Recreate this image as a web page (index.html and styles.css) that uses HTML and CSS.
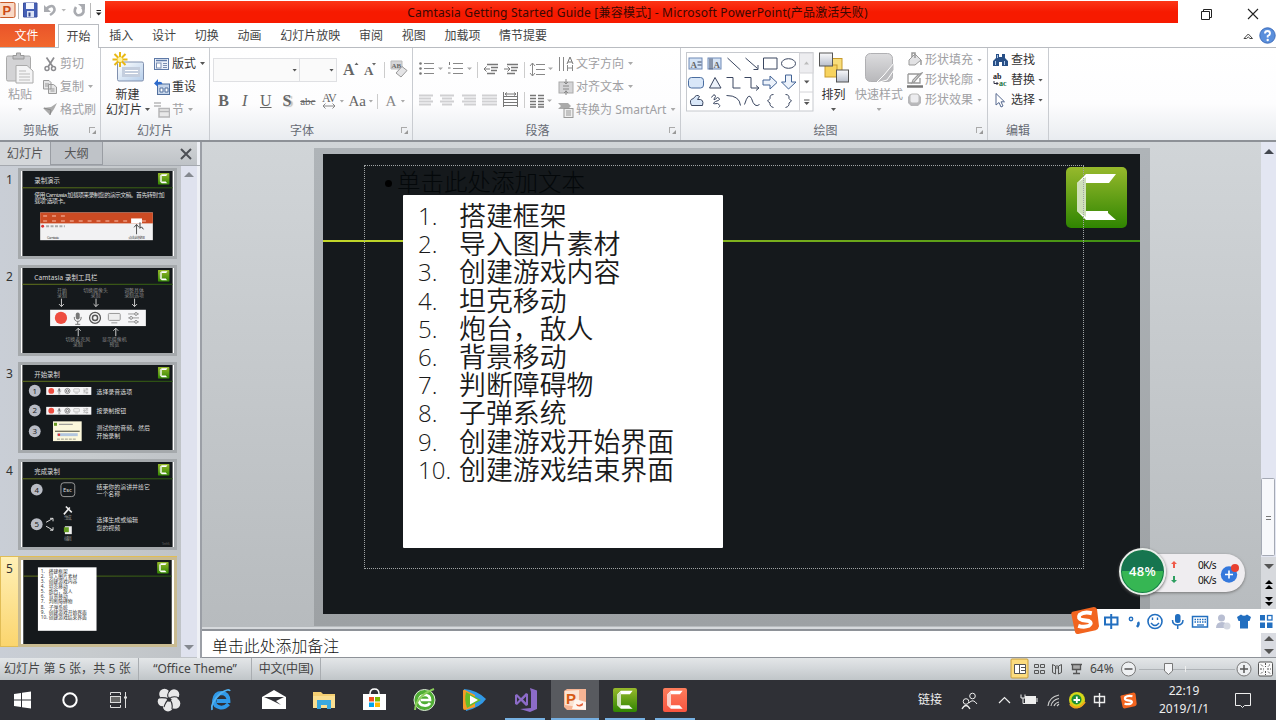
FILE: index.html
```
<!DOCTYPE html>
<html lang="zh-CN">
<head>
<meta charset="utf-8">
<title>Camtasia Getting Started Guide - Microsoft PowerPoint</title>
<link rel="stylesheet" href="styles.css">
</head>
<body>
<svg class="defs" width="0" height="0">
  <defs>
    <linearGradient id="gGreen" x1="0" y1="0" x2="0" y2="1"><stop offset="0" stop-color="#97b92c"/><stop offset="1" stop-color="#2f8501"/></linearGradient>
    <linearGradient id="gRed" x1="0" y1="0" x2="0" y2="1"><stop offset="0" stop-color="#fd7d5c"/><stop offset="1" stop-color="#f95540"/></linearGradient>
    <linearGradient id="gLine" gradientUnits="userSpaceOnUse" x1="0" y1="0" x2="152" y2="0"><stop offset="0" stop-color="#66751c"/><stop offset="1" stop-color="#2c5c10"/></linearGradient>
    <linearGradient id="gBlue" x1="0" y1="0" x2="1" y2="1"><stop offset="0" stop-color="#fff"/><stop offset="1" stop-color="#b4cdea"/></linearGradient>
    <linearGradient id="gGray" x1="0" y1="0" x2="0" y2="1"><stop offset="0" stop-color="#dcdcde"/><stop offset="1" stop-color="#b8b8bb"/></linearGradient>
    <linearGradient id="gSilver" x1="0" y1="0" x2="0" y2="1"><stop offset="0" stop-color="#fafafc"/><stop offset="1" stop-color="#b9bfcb"/></linearGradient>
    <symbol id="cam" viewBox="0 0 61 61"><rect width="61" height="61" rx="5" fill="url(#gGreen)"/><path d="M50 7H20L11 16V44L20 53H50L42 46V44H20V16H43Z" fill="#fff"/><path d="M11 16L20 10V50L11 44Z" fill="#cfe0ba"/></symbol>
    <symbol id="camred" viewBox="0 0 61 61"><rect width="61" height="61" rx="5" fill="url(#gRed)"/><path d="M50 7H20L11 16V44L20 53H50L42 44H20V16H43Z" fill="#fff"/><path d="M11 16L20 10V50L11 44Z" fill="#fcd0c8"/></symbol>
    <symbol id="sogou" viewBox="0 0 30 30"><path d="M2 6L24 1Q27 1 27.500 4L29.500 21Q29 24 26 25L8 29Q5 29 4.500 26L1 9Q0 7 2 6Z" fill="#f2641f"/><path d="M22 7.500Q14 5.500 9.500 9Q7 13 12 14.500L19 15.500Q23 17.500 19 20.500Q14 22.500 8 20.500" fill="none" stroke="#fff" stroke-width="4"/></symbol>
    <symbol id="recbar" viewBox="0 0 97 17"><rect width="97" height="17" fill="#f6f6f7"/><circle cx="11" cy="8.500" r="6.200" fill="#ee4d40"/><rect x="26" y="3" width="4" height="7" rx="2" fill="#777"/><path d="M24.500 7.500Q24.500 12 28 12T31.500 7.500M28 12V15M25.500 15H30.500" fill="none" stroke="#777"/><circle cx="45.500" cy="8.500" r="5.500" fill="none" stroke="#555" stroke-width="1.300"/><circle cx="45.500" cy="8.500" r="2.600" fill="none" stroke="#555" stroke-width="1.500"/><rect x="59" y="4" width="12" height="7" rx="1" fill="#eee" stroke="#999"/><path d="M62 13.500H68" stroke="#999"/><path d="M79 4.500H90M79 8.500H90M79 12.500H90" stroke="#999" fill="none"/><g fill="#f6f6f7" stroke="#888"><circle cx="87" cy="4.500" r="1.400"/><circle cx="82" cy="8.500" r="1.400"/><circle cx="87" cy="12.500" r="1.400"/></g></symbol>
  </defs>
</svg>

<div class="window">
  <header class="titlebar">
    <svg class="quick" width="105" height="24" viewBox="0 0 105 24">
      <rect x="-1" y="2.500" width="16" height="15" rx="1.500" fill="#f9d9c6" stroke="#c85a28"/><text x="2.500" y="15" class="pp">P</text>
      <path d="M18.500 3V19M90.500 3V18" stroke="#b8b8b8"/>
      <path d="M23.500 3H37V17H23.500Z" fill="#4560b5" stroke="#3a4ea0"/><rect x="26" y="3" width="8" height="6" fill="#f4f7ff"/><rect x="27" y="11" width="7" height="6" fill="#dce4f6"/><rect x="28.500" y="12.500" width="2" height="4" fill="#36468a"/>
      <path d="M46 9Q53 3 54.500 9Q55 12 50 15" fill="none" stroke="#a9abb0" stroke-width="2.600"/><path d="M44 5V12H51Z" fill="#a9abb0"/>
      <path d="M61.500 9H66L63.700 11.500Z" fill="#b8b8b8"/>
      <path d="M76 7Q73 12 77 15Q82 16 83.500 12Q84 9 82 7" fill="none" stroke="#a9abb0" stroke-width="2.600"/><path d="M78 4H85V10Z" fill="#a9abb0"/>
      <path d="M96.500 10.500H101" stroke="#222"/><path d="M96 12.500H101.500L98.700 15.500Z" fill="#222"/>
    </svg>
    <h1 class="caption">Camtasia Getting Started Guide [兼容模式] - Microsoft PowerPoint(产品激活失败)</h1>
    <svg class="winbtns" width="98" height="24" viewBox="0 0 98 24"><path d="M23.500 11.500H31.500V19.500H23.500ZM25.500 11.500V9.500H33.500V17.500H31.500" fill="none" stroke="#222"/><path d="M70 9L80 19M80 9L70 19" stroke="#222" stroke-width="1.100"/></svg>
  </header>

  <nav class="tabs">
    <span class="tab file">文件</span><span class="tab active">开始</span><span class="tab">插入</span><span class="tab">设计</span><span class="tab">切换</span><span class="tab">动画</span><span class="tab wide">幻灯片放映</span><span class="tab">审阅</span><span class="tab">视图</span><span class="tab mid">加载项</span><span class="tab wide2">情节提要</span>
    <svg class="help" width="36" height="24" viewBox="0 0 36 24"><path d="M4 14.500L8.300 10L12.500 14.500H10L8.300 13L6.500 14.500Z" fill="none" stroke="#444"/><circle cx="27.500" cy="11.500" r="7.700" fill="#5a8fdc" stroke="#3d6cba"/><path d="M25 9.500Q25 7 27.500 7T30 9.500Q30 11 27.700 12V13.500" fill="none" stroke="#fff" stroke-width="1.900"/><circle cx="27.700" cy="16" r="1.200" fill="#fff"/></svg>
  </nav>

  <section class="ribbon">
    <div class="group clipboard">
      <div class="body">
        <div class="big off"><svg width="30" height="32" viewBox="0 0 30 32"><rect x="1.500" y="4" width="24" height="25" rx="1.500" fill="#d3d3d5" stroke="#aaa"/><path d="M8 7V3.500H11.500V1H15.500V3.500H19V7Z" fill="#c2c2c4" stroke="#999"/><path d="M11 13.500H22L28 19V31H11Z" fill="#f4f4f5" stroke="#aaa"/><path d="M14 19H21M14 22H25M14 25H25M14 28H25" stroke="#bbb"/></svg><span>粘贴</span><i class="arr"></i></div>
        <div class="col r23">
          <div class="cmd off"><svg width="15" height="16" viewBox="0 0 15 16"><path d="M3.500 1.500L10 11M11 1.500L5 11" stroke="#8c8c90" stroke-width="1.700"/><circle cx="4" cy="12.500" r="2" fill="none" stroke="#8c8c90" stroke-width="1.500"/><circle cx="10.500" cy="12.500" r="2" fill="none" stroke="#8c8c90" stroke-width="1.500"/></svg><span>剪切</span></div>
          <div class="cmd off"><svg width="15" height="16" viewBox="0 0 15 16"><path d="M.5 1.500H6L8 3.500V10H.5ZM5.500 5.500H10.500L13.500 8V14.500H5.500Z" fill="#e6e6e7" stroke="#999"/><path d="M2 5H6M2 7H5M7.500 10H11.500M7.500 12H11.500" stroke="#999"/></svg><span>复制</span><i class="arr"></i></div>
          <div class="cmd off"><svg width="15" height="16" viewBox="0 0 15 16"><path d="M0 6L8 5L14 1L11 7L7 13Z" fill="#aaa"/><path d="M1 6L8 8L7 13" fill="none" stroke="#888"/></svg><span>格式刷</span></div>
        </div>
      </div>
      <div class="label"><span>剪贴板</span></div><i class="launch"></i>
    </div>
    <div class="group slides">
      <div class="body">
        <div class="big"><svg width="34" height="32" viewBox="0 0 34 32"><rect x="6.500" y="10" width="26" height="19" rx="1.500" fill="url(#gBlue)" stroke="#8090ae"/><path d="M11 15H29V25H11Z" fill="#c4cede"/><path d="M14 18.500H27M14 21.500H27" stroke="#fff"/><path d="M9 0V15M1.500 7.500H16.500M3.500 2L14.500 13M14.500 2L3.500 13" stroke="#e9b814" stroke-width="2"/><circle cx="9" cy="7.500" r="2.500" fill="#fff5a0"/></svg><span>新建</span><span class="inline">幻灯片<i class="arr"></i></span></div>
        <div class="col r23">
          <div class="cmd"><svg width="16" height="16" viewBox="0 0 16 16"><rect x=".5" y="2.500" width="14" height="11" fill="#edf2fa" stroke="#5f7aa8"/><path d="M2 4.500H13" stroke="#5f7aa8" stroke-width="1.500"/><rect x="2.500" y="7" width="4.500" height="5" fill="#fff" stroke="#7c90b4"/><path d="M9 7.500H13M9 9.500H13M9 11.500H13" stroke="#7c90b4"/></svg><span>版式</span><i class="arr"></i></div>
          <div class="cmd"><svg width="16" height="16" viewBox="0 0 16 16"><rect x="3.500" y="5" width="12" height="10.500" fill="#c5d4e9" stroke="#52709e"/><path d="M6 9H9V13H6ZM11 9H14V13H11Z" fill="#fff" stroke="#52709e"/><path d="M8.500 5Q8 2 4 3V0L0 4.500L4 8V5.500" fill="#2d6acb"/></svg><span>重设</span></div>
          <div class="cmd off"><svg width="16" height="16" viewBox="0 0 16 16"><path d="M0 1H7M0 4H7M5 6.500H15.500V15H5ZM5 9.500H15.500" fill="#e8e8e9" stroke="#b6b6b8" stroke-width="1.500"/></svg><span>节</span><i class="arr"></i></div>
        </div>
      </div>
      <div class="label"><span>幻灯片</span></div>
    </div>
    <div class="group font">
      <div class="fontbody">
        <div class="frow"><div class="combo name"><i class="arr"></i></div><div class="combo size"><i class="arr"></i></div>
          <svg class="fsz" width="72" height="24" viewBox="0 0 72 24"><text x="3" y="17" class="ser" font-size="16" font-weight="bold">A</text><path d="M14.500 7L16.500 4.500L18.500 7Z" fill="#666"/><text x="24" y="17" class="ser" font-size="13" font-weight="bold">A</text><path d="M32 5H36L34 7.500Z" fill="#666"/><path d="M44.500 4V20" stroke="#ccc"/><path d="M51 3H62V11H51Z" fill="#d6d6d8" stroke="#bbb"/><text x="51.500" y="10" class="ser" font-size="7" font-weight="bold">AB</text><path d="M56 15L62 8.500L67 12.500L61 19Z" fill="#e4e4e6" stroke="#999"/></svg></div>
        <div class="frow chars"><b>B</b><em>I</em><u>U</u><b class="sh">S</b><s>abc</s><span class="av">AV<svg width="14" height="6" viewBox="0 0 14 6"><path d="M1 3H13M3.500 .5L1 3L3.500 5.500M10.500 .5L13 3L10.500 5.500" fill="none" stroke="#888"/></svg></span><i class="arr"></i><span class="aa">Aa</span><i class="arr"></i><i class="vsep"></i><span class="fa">A</span><i class="arr"></i></div>
      </div>
      <div class="label"><span>字体</span></div><i class="launch"></i>
    </div>
    <div class="group para">
      <div class="body">
        <svg class="paraicons" width="140" height="74" viewBox="413 48 140 74" fill="none" stroke="#777">
          <g stroke="#888"><path d="M424 63.500H434M424 68.500H434M424 73.500H434M453 63.500H463M453 68.500H463M453 73.500H463"/></g>
          <g fill="#777" stroke="none"><circle cx="420.500" cy="63.500" r="1.300"/><circle cx="420.500" cy="68.500" r="1.300"/><circle cx="420.500" cy="73.500" r="1.300"/><path d="M438 67.500H443L440.500 70ZM467 67.500H472L469.500 70ZM548 67.500H553L550.500 70ZM547 99.500H552L549.500 102Z" fill="#aaa"/></g>
          <path d="M449.500 62V65M448 68H450.500M448 73H450.500"/>
          <path d="M477.500 62V78M524.500 62V78M524.500 92V108" stroke="#ccc"/>
          <path d="M487 64.500H498M491 67.500H498M491 70.500H497M487 73.500H495M507 64.500H518M511 67.500H518M511 70.500H517M507 73.500H515" stroke-width="1.500"/><path d="M484 69H490M486.500 66.500L484 69L486.500 71.500M504 69H510M507.500 66.500L510 69L507.500 71.500"/>
          <path d="M536 64.500H545M536 69.500H545M536 74.500H545M532.500 63V76M530 66L532.500 63L535 66M530 73L532.500 76L535 73" stroke="#888"/>
          <g stroke="#d0d0d2" stroke-width="2.200"><path d="M419 95.500H433M419 98.500H431M419 101.500H433M419 104.500H431M440 95.500H454M442 98.500H452M440 101.500H454M442 104.500H452M462 95.500H476M464 98.500H476M462 101.500H476M464 104.500H476M482 95.500H497M482 98.500H497M482 101.500H497M482 104.500H497"/></g>
          <path d="M504 96.500H517M504 99.500H517M504 102.500H517M504 105.500H517M503.500 92V107M517.500 92V107M505 94H516M507 92.500L505 94L507 95.500M514 92.500L516 94L514 95.500"/>
          <path d="M530 95.500H536M538 95.500H544M530 98.500H536M538 98.500H544M530 101.500H536M538 101.500H544M530 104.500H536M538 104.500H544M530 107H536M538 107H544" stroke-width="1.300"/>
        </svg>
        <div class="col r23">
          <div class="cmd off"><svg width="16" height="16" viewBox="0 0 16 16"><path d="M1.500 1V15M5.500 1V15M9.500 9V15M14.500 9V15M9.500 12H14.500" stroke="#888"/><path d="M9 8L12 1L15 8M10 6H14" fill="none" stroke="#777"/></svg><span>文字方向</span><i class="arr"></i></div>
          <div class="cmd off"><svg width="16" height="16" viewBox="0 0 16 16"><rect x="1" y="3" width="14" height="11" fill="#d5d5d7" stroke="#aaa"/><path d="M5 7H11M5 10H11" stroke="#888"/><path d="M8 0V5M6 3L8 5L10 3M8 16V11.500M6 14L8 12L10 14" fill="none" stroke="#888"/></svg><span>对齐文本</span><i class="arr"></i></div>
          <div class="cmd off"><svg width="16" height="16" viewBox="0 0 16 16"><path d="M0 1H10L13 4L10 7H0L3 4Z" fill="#aaa"/><rect x="6" y="6.500" width="9" height="9" fill="#eee" stroke="#999"/><path d="M8 9H13M8 11H13M8 13H13" stroke="#999"/></svg><span class="smart">转换为 SmartArt</span><i class="arr"></i></div>
        </div>
      </div>
      <div class="label"><span>段落</span></div><i class="launch"></i>
    </div>
    <div class="group draw">
      <div class="body">
        <svg class="gallery" width="128" height="60" viewBox="685.500 51.500 128 60" fill="none" stroke="#3a4660">
          <rect x="686" y="52" width="126.500" height="58.500" fill="#fff" stroke="#c6c9ce"/><rect x="799" y="52.500" width="13.500" height="20" fill="#ededf0" stroke="#d4d4d8"/><path d="M799 91.500H812.500" stroke="#d4d4d8"/><path d="M799 73V110" stroke="#d4d4d8"/>
          <path d="M803.500 64L806 61L808.500 64Z" fill="#bbb" stroke="none"/><path d="M803.500 80H809L806.200 83ZM803.500 101.500H809L806.200 104.500Z" fill="#555" stroke="none"/><path d="M803.500 99.500H809" stroke="#555"/>
          <rect x="688.500" y="57.500" width="13" height="11" fill="#d6e4f6" stroke="#6f89b6"/><text x="690" y="67" class="ser" font-size="9" font-weight="bold" fill="#223">A</text><path d="M697 61.500H701M697 64.500H701"/>
          <rect x="707.500" y="57.500" width="13" height="11" fill="#d6e4f6" stroke="#6f89b6"/><text x="713" y="67" class="ser" font-size="9" font-weight="bold" fill="#223">A</text><path d="M709.500 58V69M711.500 58V69"/>
          <path d="M727 57.500L740 69.500M745 57.500L757 68M757.500 64.500V69H753M763 57.500H776.500V68.500H763Z" /><ellipse cx="788" cy="63" rx="7" ry="4.800"/>
          <rect x="688" y="77" width="15" height="10.500" rx="3" fill="#d9e7f8" stroke="#4a6da0"/><path d="M709 87.500L714.500 77L720.500 87.500Z" fill="#edf3fb"/><path d="M726 77H732.500V87.500H740M744 77H750.500V87.500H758M755.500 85L758.500 87.500L755.500 90"/>
          <path d="M762.500 79.500H769.500V75.500L776.500 82L769.500 88.500V84.500H762.500ZM785 74.500H791V81.500H795.500L788 88.500L781 81.500H785Z" fill="#edf3fb" stroke="#426395"/>
          <path d="M691 105Q688 99 693 98Q696 93 699 96L697 99Q704 98 702 105Z" fill="#d9e7f8"/><path d="M711 97Q714 92 715 96Q711 102 717 97Q722 99 715 101Q710 104 717 103Q721 105 718 107"/><path d="M726 95Q739 95 740 105M744 104Q748 91 751 98Q754 108 759 104"/><path d="M773 94Q769 94 769.500 98L767 100.500L769.500 102.500Q769 106 773 107M785 94Q789 94 788.500 98L791 100.500L788.500 102.500Q789 106 785 107" />
        </svg>
        <div class="big arrange"><svg width="32" height="32" viewBox="0 0 32 32"><rect x="12" y="6.500" width="12" height="12" fill="#f8dd7b" stroke="#c79a2c"/><rect x="7" y="13" width="12" height="12" fill="#f7d35e" stroke="#c79a2c"/><rect x="1.500" y="1" width="13" height="13" fill="url(#gSilver)" stroke="#555"/><rect x="18.500" y="18" width="12" height="12" fill="url(#gSilver)" stroke="#555"/></svg><span>排列</span><i class="arr"></i></div>
        <div class="big off styles"><svg width="32" height="32" viewBox="0 0 32 32"><rect x="2.500" y="1.500" width="27" height="28" rx="5" fill="url(#gGray)" stroke="#b0b0b3"/><path d="M31 11L21 23L13 31L24 28L31 18Z" fill="#bcbcbf" stroke="#fff"/></svg><span>快速样式</span><i class="arr"></i></div>
        <div class="col r20">
          <div class="cmd off"><svg width="16" height="16" viewBox="0 0 16 16"><path d="M2 8L8 2L14 8L8 13H2Z" fill="#e2e2e4" stroke="#999"/><path d="M5 5V1H8V6M14 8V13" fill="none" stroke="#999" stroke-width="1.500"/></svg><span>形状填充</span><i class="arr"></i></div>
          <div class="cmd off"><svg width="16" height="16" viewBox="0 0 16 16"><path d="M1 2H12L15 1L7 10L5 11L6 8L12 2M1 2V11H13V6" fill="none" stroke="#999" stroke-width="1.300"/><path d="M0 14.500H16" stroke="#777" stroke-width="2.500"/></svg><span>形状轮廓</span><i class="arr"></i></div>
          <div class="cmd off"><svg width="16" height="16" viewBox="0 0 16 16"><path d="M3 2H11L14 5V11L11 14H4L1 11V5Z" fill="#b7b7ba"/><rect x="3" y="2" width="9" height="9" rx="2" fill="#ececef" stroke="#bbb"/></svg><span>形状效果</span><i class="arr"></i></div>
        </div>
      </div>
      <div class="label"><span>绘图</span></div><i class="launch"></i>
    </div>
    <div class="group edit">
      <div class="body">
        <div class="col r20">
          <div class="cmd"><svg width="16" height="16" viewBox="0 0 16 16"><path d="M3 2H6V5H9V2H12V6L15 9V14H9V10H6V14H0V9L3 6Z" fill="#284f86"/><path d="M2.500 9V13M11.500 9V13M4.500 3V6" stroke="#a8c4e8"/></svg><span>查找</span></div>
          <div class="cmd"><svg width="16" height="16" viewBox="0 0 16 16"><text x="0" y="7" class="abc" fill="#222">ab</text><text x="6" y="14" class="abc" fill="#18733d">ac</text><path d="M1 9V11.500H5M3.500 10L5 11.500L3.500 13" fill="none" stroke="#334"/></svg><span>替换</span><i class="arr"></i></div>
          <div class="cmd"><svg width="16" height="16" viewBox="0 0 16 16"><path d="M3 1.500V13L6 10.500L8 15L10 14L8 9.800H11.500Z" fill="#fff" stroke="#56698f"/></svg><span>选择</span><i class="arr"></i></div>
        </div>
      </div>
      <div class="label"><span>编辑</span></div>
    </div>
  </section>

  <main class="work">
    <aside class="pane">
      <div class="panetabs"><span class="ptab on">幻灯片</span><span class="ptab">大纲</span><svg class="close" width="14" height="14" viewBox="0 0 14 14"><path d="M2 2L12 12M12 2L2 12" stroke="#4c4f55" stroke-width="2"/></svg></div>
      <div class="panebody">
        <ol class="thumbs">
          <li><b>1</b><svg viewBox="0 0 152 86"><rect width="152" height="86" fill="#15191c"/><path d="M0 17H152" stroke="url(#gLine)"/><use href="#cam" x="137" y="2" width="12" height="12"/>
            <g class="tt"><text x="12" y="12" textLength="26">录制演示</text><text x="12" y="26" class="t6" textLength="132">使用 Camtasia 加载项来录制您的演示文稿。首先转到“加</text><text x="12" y="32.500" class="t6" textLength="35">载项”选项卡。</text></g>
            <rect x="18" y="42" width="114" height="28" fill="#f2f2f3"/><rect x="18" y="42" width="114" height="11" fill="#cb4b23"/><path d="M21 45.500H45M21 50.500H106M121 50.500H130" stroke="#ec9a80" stroke-width="1.500" stroke-dasharray="4 5"/><rect x="110" y="48" width="11" height="5" fill="#fff"/><circle cx="20.500" cy="56" r="1.500" fill="#d33"/><path d="M24 56H43" stroke="#aaa" stroke-width="2" stroke-dasharray="3 1.500"/><path d="M115.500 64V54M113 57L115.500 54L118 57" fill="none" stroke="#555"/><path d="M119 52V58L120.500 56.500L122.500 59" stroke="#333" fill="#fff"/><g class="dk"><text x="25" y="69" textLength="12">Camtasia</text><text x="107" y="69" textLength="17">点击此按钮</text></g></svg></li>
          <li><b>2</b><svg viewBox="0 0 152 86"><rect width="152" height="86" fill="#15191c"/><path d="M0 16.500H152" stroke="url(#gLine)"/><use href="#cam" x="137" y="2" width="12" height="12"/>
            <g class="tt"><text x="12" y="12" textLength="64">Camtasia 录制工具栏</text></g><g class="tg"><text x="40" y="24" text-anchor="middle">开始</text><text x="40" y="29" text-anchor="middle">录制</text><text x="74" y="24" text-anchor="middle">切换摄像头</text><text x="74" y="29" text-anchor="middle">录制</text><text x="113" y="24" text-anchor="middle">调整具体</text><text x="113" y="29" text-anchor="middle">录制选项</text><text x="56" y="74" text-anchor="middle">切换麦克风</text><text x="56" y="79" text-anchor="middle">录制</text><text x="93" y="74" text-anchor="middle">显示摄像机</text><text x="93" y="79" text-anchor="middle">预览</text></g>
            <path d="M39.500 31V39M37 36.500L39.500 39L42 36.500M74.500 31V39M72 36.500L74.500 39L77 36.500M113.500 31V39M111 36.500L113.500 39L116 36.500M56.500 69V61M54 63.500L56.500 61L59 63.500M94.500 69V61M92 63.500L94.500 61L97 63.500" fill="none" stroke="#ccc"/><use href="#recbar" x="28" y="42" width="97" height="17"/></svg></li>
          <li><b>3</b><svg viewBox="0 0 152 86"><rect width="152" height="86" fill="#15191c"/><path d="M0 16.500H152" stroke="url(#gLine)"/><use href="#cam" x="137" y="2" width="12" height="12"/>
            <g class="tt"><text x="12" y="12" textLength="26">开始录制</text><text x="75" y="29" class="t6" textLength="36">选择录音选项</text><text x="75" y="49" class="t6" textLength="30">按录制按钮</text><text x="75" y="66" class="t6" textLength="54">测试你的音频，然后</text><text x="75" y="73.500" class="t6" textLength="24">开始录制</text></g>
            <g class="num"><circle cx="12.500" cy="26" r="6"/><circle cx="12.500" cy="46" r="6"/><circle cx="12.500" cy="67" r="6"/><text x="12.500" y="29">1</text><text x="12.500" y="49">2</text><text x="12.500" y="70">3</text></g><use href="#recbar" x="24" y="22" width="46" height="8.500"/><use href="#recbar" x="24" y="42" width="46" height="8.500"/><rect x="31" y="57" width="29" height="20" fill="#fcf8dc"/><rect x="32" y="58.500" width="3" height="3" fill="#679a20"/><path d="M37 60H51" stroke="#888"/><path d="M33 67H58" stroke="#443"/><path d="M35 70.500H56" stroke="#b2c6df" stroke-width="3"/><circle cx="37" cy="70.500" r="1.300" fill="#d33"/><path d="M35 75H54" stroke="#998" stroke-dasharray="3 1"/></svg></li>
          <li><b>4</b><svg viewBox="0 0 152 86"><rect width="152" height="86" fill="#15191c"/><path d="M0 17H152" stroke="url(#gLine)"/><use href="#cam" x="137" y="2" width="12" height="12"/>
            <g class="tt"><text x="12" y="12" textLength="26">完成录制</text><text x="75" y="27" class="t6" textLength="54">结束你的演讲并给它</text><text x="75" y="34" class="t6" textLength="24">一个名称</text><text x="75" y="61" class="t6" textLength="42">选择生成或编辑</text><text x="75" y="68.500" class="t6" textLength="24">您的视频</text></g><g class="num"><circle cx="14.500" cy="28" r="6"/><circle cx="14.500" cy="63" r="6"/><text x="14.500" y="31">4</text><text x="14.500" y="66">5</text></g>
            <rect x="39" y="21" width="14" height="14" rx="3" fill="none" stroke="#999"/><text x="41" y="30" class="tt t6">Esc</text><path d="M24 61L31 57M28 57H31V60M24 65L31 69M28 69H31V66" fill="none" stroke="#ddd"/><path d="M42 53L48 46M44 45L50 51" stroke="#eee" stroke-width="1.600"/><path d="M43 65H50V73H43Z" fill="#eee"/><rect x="42" y="66" width="5" height="5" fill="#659e22"/><g class="tg"><text x="42" y="58" textLength="8">生成</text><text x="42" y="78.500" textLength="8">编辑</text><text x="141" y="84" textLength="8" class="dk">TechS</text></g></svg></li>
          <li class="sel"><b>5</b><svg viewBox="0 0 152 86"><rect width="152" height="86" fill="#15191c"/><path d="M0 16.500H152" stroke="url(#gLine)"/><use href="#cam" x="137" y="2" width="12" height="12"/><rect x="15" y="7.500" width="60" height="65" fill="#fff"/>
            <g class="dk5"><text x="18" y="13">1.</text><text x="26" y="13">搭建框架</text><text x="18" y="18.300">2.</text><text x="26" y="18.300">导入图片素材</text><text x="18" y="23.500">3.</text><text x="26" y="23.500">创建游戏内容</text><text x="18" y="28.800">4.</text><text x="26" y="28.800">坦克移动</text><text x="18" y="34">5.</text><text x="26" y="34">炮台，敌人</text><text x="18" y="39.300">6.</text><text x="26" y="39.300">背景移动</text><text x="18" y="44.500">7.</text><text x="26" y="44.500">判断障碍物</text><text x="18" y="49.800">8.</text><text x="26" y="49.800">子弹系统</text><text x="18" y="55">9.</text><text x="26" y="55">创建游戏开始界面</text><text x="18" y="60.300">10.</text><text x="26" y="60.300">创建游戏结束界面</text></g></svg></li>
        </ol>
        <div class="scroll"><i class="up"></i><i class="down"></i></div>
      </div>
    </aside>
    <section class="editor">
      <div class="stage">
        <div class="canvas">
          <div class="frame"><div class="slide">
            <div class="greenline"></div>
            <div class="holder">单击此处添加文本</div>
            <svg class="logo" width="61" height="61"><use href="#cam"/></svg>
            <div class="outline"></div>
            <ol class="list"><li><b>1.</b>搭建框架</li><li><b>2.</b>导入图片素材</li><li><b>3.</b>创建游戏内容</li><li><b>4.</b>坦克移动</li><li><b>5.</b>炮台，敌人</li><li><b>6.</b>背景移动</li><li><b>7.</b>判断障碍物</li><li><b>8.</b>子弹系统</li><li><b>9.</b>创建游戏开始界面</li><li><b>10.</b>创建游戏结束界面</li></ol>
          </div></div>
        </div>
        <svg class="vscroll" width="15" height="486" viewBox="0 0 15 486"><rect width="15" height="486" fill="#e3e6f2"/><path d="M3 12L8 7L13 12Z" fill="#42464e"/><rect x=".5" y="336.500" width="13" height="77" rx="1" fill="#f7f8fb" stroke="#a4a9b4"/><path d="M5 374.500H10M5 377.500H10" stroke="#777"/><rect y="415" width="15" height="71" fill="#d7d9dd"/><path d="M3 422H13L8 427Z" fill="#555"/><path d="M4 442L8 438L12 442ZM4 447L8 443L12 447ZM4 455H12L8 459ZM4 460H12L8 464Z" fill="#000"/></svg>
      </div>
      <div class="notes"><span>单击此处添加备注</span><svg width="15" height="26" viewBox="0 0 15 26"><rect width="15" height="26" fill="#d9dbe1"/><path d="M3 10L8 5L13 10ZM3 18H13L8 23Z" fill="#555"/></svg></div>
    </section>
  </main>

  <footer class="status">
    <span class="s1">幻灯片 第 5 张，共 5 张</span><span class="s2">“Office Theme”</span><span class="s3">中文(中国)</span>
    <svg width="78" height="22" viewBox="0 0 78 22"><rect x="1" y="1" width="17" height="19" rx="1" fill="#fcdc7e" stroke="#c89e3c"/><path d="M4.500 6.500H15.500V15.500H4.500ZM9.500 6V16M11 9.500H15M11 12.500H15" fill="#fff" stroke="#555"/><g fill="none" stroke="#555"><path d="M24.500 6.500H28.500V9.500H24.500ZM30.500 6.500H34.500V9.500H30.500ZM24.500 12.500H28.500V15.500H24.500ZM30.500 12.500H34.500V15.500H30.500Z"/><path d="M42.500 6.500L45.500 8V16L42.500 14.500ZM51.500 6.500L48.500 8V16L51.500 14.500ZM47 7V11"/></g><path d="M61 6.500H72M62.500 7V11.500H70.500V7M66.500 11V15M63 15.500H70" fill="#aaa" stroke="#555" stroke-width="1.300"/></svg>
    <span class="pct">64%</span>
    <svg width="157" height="22" viewBox="0 0 157 22"><circle cx="9.500" cy="11" r="7" fill="#eef0f2" stroke="#777"/><path d="M5.500 11H13.500" stroke="#555" stroke-width="1.500"/><path d="M20 11.500H116" stroke="#aeb2b6"/><path d="M45.500 5.500H53.500V13L49.500 16.500L45.500 13Z" fill="#f4f5f7" stroke="#777"/><path d="M66.500 8V14" stroke="#eee"/><circle cx="125" cy="11" r="7" fill="#eef0f2" stroke="#777"/><path d="M121 11H129M125 7V15" stroke="#555" stroke-width="1.500"/><rect x="139.500" y="4" width="14" height="14" rx="1.500" fill="#fafafa" stroke="#555"/><path d="M146.500 5V9M146.500 13V17M141 11H145M148 11H152M142 6.500L144.500 9M151 6.500L148.500 9M142 15.500L144.500 13M151 15.500L148.500 13" stroke="#555" stroke-dasharray="2 1"/></svg>
  </footer>

  <footer class="taskbar">
    <span class="app n"><svg viewBox="0 0 26 26"><path d="M5 7L12 6V12.500H5ZM13 5.800L22 4.500V12.500H13ZM5 13.500H12V20L5 19ZM13 13.500H22V21.500L13 20.200Z" fill="#fff"/></svg></span>
    <span class="app n"><svg viewBox="0 0 26 26"><circle cx="13" cy="13" r="6.700" fill="none" stroke="#fff" stroke-width="2"/></svg></span>
    <span class="app n"><svg viewBox="0 0 26 26" fill="none" stroke="#ddd"><path d="M5.500 8V5.500H15.500V8M5.500 18V20.500H15.500V18M20.500 5V21"/><rect x="5.500" y="9.500" width="10" height="6" fill="#666"/><path d="M19 10.500H22" stroke-width="2"/></svg></span>
    <span class="app w"><svg viewBox="0 0 26 26" fill="#e8e8e9"><g><circle cx="8.500" cy="7" r="5.300"/><circle cx="18" cy="7.500" r="5.300"/><circle cx="19" cy="16.500" r="5.300"/><circle cx="12" cy="19.500" r="5"/><circle cx="6.500" cy="14.500" r="4.800"/></g><path d="M13 12Q10 8 14 3M13 12Q17 8 23 11M13 12Q17 15 16 22M13 12Q10 14 8 20M13 12Q8 10 2 11" fill="none" stroke="#303136" stroke-width="1.100"/></svg></span>
    <span class="app ie"><svg viewBox="0 0 26 26"><path d="M20.500 17Q17 21 12.500 20.500Q6 19.500 6 13.500Q7 6 13.500 6Q20.500 6.500 20.500 14H8.500" fill="none" stroke="#309ae9" stroke-width="3.800"/><path d="M4 23Q2 16 13 6Q21 1 22 4" fill="none" stroke="#51b2f1" stroke-width="1.700"/></svg></span>
    <span class="app"><svg viewBox="0 0 26 26"><path d="M1 10L13 3L25 10V22H1Z" fill="#fff"/><path d="M3 10H23L15 14L20 18L10 13Z" fill="#303136"/></svg></span>
    <span class="app"><svg viewBox="0 0 26 26"><path d="M2 5H10L12 7H24V21H2Z" fill="#f5cf72"/><path d="M2 9H24V21H2Z" fill="#fbdf91"/><path d="M6 22V13H20V22H16V18H10V22Z" fill="#3aa8df"/></svg></span>
    <span class="app"><svg viewBox="0 0 26 26"><path d="M2 7H25V23H2Z" fill="#fff"/><path d="M9 7Q9 2 13.500 2T18 7" fill="none" stroke="#fff" stroke-width="1.500"/><path d="M8 10H13V14.500H8Z" fill="#f05023"/><path d="M14 10H19V14.500H14Z" fill="#7fba00"/><path d="M8 15.500H13V20H8Z" fill="#00a4ef"/><path d="M14 15.500H19V20H14Z" fill="#ffb900"/></svg></span>
    <span class="app"><svg viewBox="0 0 26 26"><circle cx="13.500" cy="13" r="10.500" fill="#50ad35" stroke="#ddebd8"/><path d="M19 16Q17 19 13 18.500Q8 18 8 13Q9 8 14 8Q19 8 19 13H10" fill="none" stroke="#fff" stroke-width="2.700"/><path d="M4 23Q5 9 23 2" fill="none" stroke="#8bcf5c" stroke-width="2"/></svg></span>
    <span class="app"><svg viewBox="0 0 26 26"><path d="M3 2Q16 3 25 12Q20 20 5 24Z" fill="#3299e6"/><path d="M2 4Q2 2 4 3L14 8V20L4 23Q2 23 2 21Z" fill="#f69b28"/><path d="M5 5L20 13L6 21Q3 13 5 5Z" fill="#66bd28"/><path d="M9 8.500L17 13L9 17.500Z" fill="#fff"/></svg></span>
    <span class="app run first"><svg viewBox="0 0 26 26"><path d="M18 1L25 3.500V22L18 25L8 22L19 21V5ZM3 8L5 7L9 11L14 6L16 7V18L14 19L9 14L5 18L3 17ZM5 10V15L7.500 12.500ZM14 9.500L11 12.500L14 15.500Z" fill="#8c6bc8" fill-rule="evenodd"/></svg></span>
    <span class="app run current"><svg viewBox="0 0 26 26"><path d="M5 2H24V23H5L2 20V4Z" fill="#f6b494"/><path d="M3 4L17 3V20L3 18Z" fill="#fbe3d2"/><text x="4" y="17" class="ppbig">P</text><path d="M13 12L24 15V23L10 22Z" fill="#fff5ee"/><path d="M14 17A3.500 3 0 1 0 21 16L17 18Z" fill="#e6623a"/></svg></span>
    <span class="app run"><svg viewBox="0 0 26 26"><use href="#cam" x="1" y="1" width="24" height="24"/></svg></span>
    <span class="app run"><svg viewBox="0 0 26 26"><use href="#camred" x="1" y="1" width="24" height="24"/></svg></span>
    <span class="tray">链接</span>
    <svg class="trayicons" width="190" height="40" viewBox="952 680 190 40" fill="none" stroke="#eee"><circle cx="973.500" cy="696" r="2.800"/><path d="M970 703Q974 698 978 704" /><circle cx="967" cy="701.500" r="2.800"/><path d="M963 709Q967 702 971 709" stroke-width="1.300"/><path d="M1000 703L1005.500 697.500L1011 703" stroke-width="1.200"/><rect x="1026.500" y="696.500" width="10" height="7" fill="#eee"/><path d="M1038 698V702M1022 694.500V698H1026V694.500M1024 698V703.500H1026" /><path d="M1049 706Q1050 697 1060 695M1052 706Q1053 700 1060 698.500M1055 706Q1056 703 1060 702M1058 706L1060 704" stroke="#ccc" stroke-width="1.100"/><circle cx="1078" cy="700" r="8" fill="#d4d719" stroke="none"/><path d="M1071 704Q1078 712 1086 702" stroke="#f0a21b" stroke-width="2"/><circle cx="1077.500" cy="699.500" r="5" fill="#198d36" stroke="none"/><path d="M1074.500 700H1081M1077.800 696.500V703" stroke="#fff"  stroke-width="1.800"/><path d="M1095.500 696.500H1105.500V702.500H1095.500ZM1100.500 693V707" stroke-width="1.400"/><use href="#sogou" x="1121" y="692" width="17" height="17" stroke="none"/></svg>
    <div class="clock"><span>22:19</span><span>2019/1/1</span></div>
    <svg class="action" width="18" height="18" viewBox="0 0 18 18"><path d="M1.500 2.500H16.500V14.500H10.500L8.500 16.500L6.500 14.500H1.500Z" fill="none" stroke="#eee"/></svg>
  </footer>
</div>

<div class="net">
  <div class="speed"><svg width="8" height="26" viewBox="0 0 8 26"><path d="M4 1L7 4H5V8H3V4H1Z" fill="#ef5a4a"/><path d="M3 16H5V20H7L4 23L1 20H3Z" fill="#2d9e60"/></svg><div class="rates"><span>0K/s</span><span>0K/s</span></div><svg width="20" height="22" viewBox="0 0 20 22"><circle cx="9" cy="12.500" r="8.200" fill="#3478dc"/><path d="M5 12.500H13M9 8.500V16.500" stroke="#fff" stroke-width="1.600"/><circle cx="15" cy="6" r="4" fill="#e8402f"/></svg></div>
  <div class="ball">48%</div>
</div>
<div class="ime">
  <svg width="206" height="32" viewBox="1070 606 206 32" fill="none" stroke="#226fc0" stroke-width="2"><rect x="1086" y="609" width="190" height="24" fill="#fff" stroke="none"/><use href="#sogou" x="1070" y="606" width="30" height="29" stroke="none"/>
    <path d="M1105 617.500H1117.500V624.500H1105ZM1111.200 614V629"/><circle cx="1131" cy="619" r="1.700" stroke-width="1.400"/><path d="M1138 622Q1139.500 624 1137 627" stroke-width="2.500"/>
    <circle cx="1155" cy="621.500" r="7" stroke-width="1.600"/><path d="M1152.500 617.500V620M1157.500 617.500V620M1151 623Q1155 628 1159 623" stroke-width="1.400"/>
    <rect x="1175" y="614" width="5.500" height="9" rx="2.500" fill="#226fc0" stroke="none"/><path d="M1172.500 620Q1172.500 625 1177.700 625T1183 620M1177.700 625V629" stroke-width="1.500"/>
    <rect x="1192.500" y="616.500" width="15" height="10.500" stroke-width="1.500"/><path d="M1194.500 619.500H1206M1194.500 622H1206" stroke-dasharray="1.500 1" stroke-width="1.500"/><path d="M1197 625H1204" stroke-width="1.300"/>
    <g stroke="none" fill="#b8bed2"><circle cx="1221.500" cy="618" r="3.500"/><path d="M1216 628Q1216 622 1222 622T1227 628Z"/><circle cx="1227" cy="626" r="3.500" fill="#d4d8e2"/></g>
    <path d="M1237 617L1241 614.500Q1244 617 1247 614.500L1251 617L1249.500 621H1248V628.500H1240V621H1238.500Z" fill="#226fc0" stroke="none"/><path d="M1260 615H1265V620.500H1260ZM1260 622.500H1265V628H1260ZM1267 622.500H1272.500V628H1267Z" fill="#226fc0" stroke="none"/><rect x="1267.500" y="615.500" width="4.500" height="4.500" stroke-width="1.300"/>
  </svg>
</div>
</body>
</html>
```
FILE: styles.css
```
* { box-sizing: border-box; }
body { margin: 0; width: 1276px; height: 720px; overflow: hidden; position: relative; font: 12px/16px "Noto Sans", "Noto Sans CJK SC", sans-serif; color: #333; background: #fff; }
svg { display: block; flex: none; }
.defs { position: absolute; }
.window { display: flex; flex-direction: column; height: 720px; }
.titlebar { display: flex; height: 24px; flex: none; }
.caption { flex: 1; margin: 1px 0; height: 22px; background: linear-gradient(#fb3617, #f71a00 50%); color: #3a0904; font-size: 12px; font-weight: 400; line-height: 23px; text-align: center; padding-right: 8px; white-space: nowrap; letter-spacing: .19px; }
.pp { font: bold 13px "Liberation Sans"; fill: #cc4b15; }
.ppbig { font: bold 15px "Liberation Sans"; fill: #d65a15; }
.tabs { display: flex; height: 24px; flex: none; border-bottom: 1px solid #b9bcc1; font-size: 12px; line-height: 24px; color: #444; }
.tab { width: 42.700px; text-align: center; white-space: nowrap; }
.file { width: 55px; background: linear-gradient(#e9542a, #f2682d); color: #fff; margin-right: 3px; padding-right: 2px; }
.active { width: 41px; height: 24px; border: 1px solid #b9bcc1; border-bottom: 0; background: #fff; line-height: 23px; margin-right: 1px; }
.tab.wide { width: 79px; } .tab.mid { width: 55px; } .tab.wide2 { width: 66px; }
.help { margin-left: auto; }
.ribbon { display: flex; height: 94px; flex: none; background: linear-gradient(#fff, #fdfdfe 60%, #e9ecf0); border-bottom: 2px solid #8d9197; }
.group { position: relative; flex: none; border-right: 1px solid #c9ccd1; display: flex; flex-direction: column; }
.clipboard { width: 101px; } .slides { width: 109px; } .font { width: 203px; } .para { width: 268px; } .draw { width: 307px; } .edit { width: 61px; }
.body { display: flex; height: 74px; }
.label { text-align: center; line-height: 18px; color: #666b74; padding-right: 12px; }
.clipboard .label { padding-right: 18px; } .slides .label { padding-right: 0; } .font .label { padding-right: 18px; } .edit .label { padding: 0; } .draw .label { padding-right: 17px; }
.para .label { padding-right: 18px; }
.launch { position: absolute; right: 5px; bottom: 7px; width: 6px; height: 6px; border-top: 1px solid #aaa; border-left: 1px solid #aaa; }
.launch::after { content: ""; position: absolute; right: -1px; bottom: -1px; border: 2px solid transparent; border-right-color: #999; border-bottom-color: #999; }
.arr { width: 5px; height: 3px; background: #555; clip-path: polygon(0 0, 100% 0, 50% 100%); flex: none; display: block; }
.off { color: #a0a0a3; } .off .arr { background: #aaa; }
.big { width: 40px; padding-top: 4px; display: flex; flex-direction: column; align-items: center; white-space: nowrap; }
.big > span { line-height: 15px; }
.big > span:first-of-type { margin-top: 3px; }
.big > .arr { margin-top: 6px; }
.slides .big { width: 53px; } .slides .big svg { margin-top: 0; }
.inline { display: flex; align-items: center; } .inline .arr { margin-left: 3px; }
.slides .inline { margin-left: 1px; }
.col { display: flex; flex-direction: column; padding-top: 4px; }
.r23 .cmd { height: 23px; } .r20 .cmd { height: 20px; }
.col.r20 { padding-top: 2px; }
.cmd { display: flex; align-items: center; gap: 2px; white-space: nowrap; }
.cmd .arr { margin-left: 2px; }
.clipboard .col { margin-left: 3px; } .slides .col { margin-left: 0; }
.fontbody { height: 74px; padding: 10px 0 0 3px; }
.frow { display: flex; height: 24px; align-items: center; }
.combo { height: 24px; border: 1px solid #dfe0e3; background: #fafafa; display: flex; align-items: center; justify-content: flex-end; padding-right: 2px; }
.combo.name { width: 90px; } .combo.size { width: 39px; margin-left: -1px; } .fsz { margin-left: 3px; }
.ser { font-family: "Liberation Serif"; fill: #666; stroke: none; }
.chars { margin-top: 7px; color: #666; font: 16px/20px "Liberation Serif"; }
.chars > b, .chars > em, .chars > u { width: 21.100px; text-align: center; flex: none; }
.sh { text-shadow: 2px 1px 1px #bbb; }
.chars s { width: 21px; font-size: 11px; text-align: center; }
.av { font-size: 12px; line-height: 10px; width: 21px; display: flex; flex-direction: column; align-items: center; letter-spacing: -1px; }
.chars .arr { background: #aaa; } .aa { font-size: 15px; margin-left: 4px; width: 20px; }
.vsep { width: 1px; height: 15px; background: #ccc; margin: 0 7px 0 4px; } .fa { width: 15px; font-size: 15px; color: #888; }
.para .col { margin-left: 5px; } .smart { letter-spacing: .05px; font-size: 12px; }
.gallery { margin: 4px 0 0 5px; }
.arrange { width: 39px; } .styles { width: 52px; }
.draw .col { margin-left: 2px; } .edit .col { margin-left: 5px; }
.edit .cmd { gap: 2px; } .edit .cmd .arr { margin-left: 1px; }
.abc { font: bold 8px "Liberation Serif"; }

.work { display: flex; height: 516px; flex: none; background: #c8ccd0; }
.pane { width: 202px; flex: none; border-right: 2px solid #9b9fa6; background: linear-gradient(90deg, #c9ced6, #c7cbce 45%, #bec2c6); box-shadow: inset -3px 0 #eef0f5; display: flex; flex-direction: column; }
.panetabs { display: flex; height: 23px; margin-right: 3px; flex: none; color: #555; font-size: 12.200px; line-height: 23px; background: linear-gradient(#d0d3d6, #bfc3c7); }
.ptab { width: 52px; text-align: center; border-right: 1px solid #999da3; border-bottom: 1px solid #999da3; background: #bfc3c8; }
.ptab.on { width: 51px; background: #d4d7da; border-bottom: 0; }
.close { margin: 5px 4px 0 auto; }
.panebody { display: flex; flex: 1; height: 493px; border-top: 1px solid #a5a9af; }
.thumbs { list-style: none; margin: 0; padding: 0; width: 181px; flex: none; }
.thumbs li { display: flex; height: 90px; margin-bottom: 6.900px; width: 177px; }
.thumbs li:first-child { margin-top: 2px; }
.thumbs b { width: 18px; flex: none; padding: 5px 0 0 6px; font-weight: 400; font-size: 12px; line-height: 14px; }
.thumbs li > svg { width: 159px; height: 91px; border: 3px solid #a5a9ac; background: #fff; }
.thumbs li.sel { background: linear-gradient(#fff0b6, #fbd56e); border: 1px solid #e1bd56; height: 91px; }
.thumbs li.sel b { width: 17px; padding-left: 5px; }
.thumbs li.sel > svg { border-color: #c9bb91; height: 90px; }
.tt { font-size: 6.500px; fill: #ddd; } .t6 { font-size: 6px; } .tg { font-size: 5px; fill: #888; }
.dk { font-size: 4px; fill: #555; } .dk5 { font-size: 4.900px; fill: #333; }
.num circle { fill: #b9bcc5; } .num text { font-size: 8px; text-anchor: middle; fill: #222; }
.scroll { width: 16px; height: 491px; background: #dfe2ee; display: flex; flex-direction: column; justify-content: space-between; align-items: center; padding: 6px 0 7px; }
.up, .down { width: 10px; height: 5px; background: #858990; clip-path: polygon(50% 0, 100% 100%, 0 100%); } .down { transform: scaleY(-1); }
.editor { flex: 1; display: flex; flex-direction: column; }
.stage { display: flex; height: 487px; border-bottom: 2px solid #d6d9dc; }
.canvas { flex: 1; background: linear-gradient(#d1d5d8, #b7bbbe); padding: 6px 0 0 112px; }
.frame { width: 836px; height: 478px; background: linear-gradient(#afb4b8, #9da1a4); padding: 6px 9px; }
.slide { width: 817px; height: 460px; background: #15191c; position: relative; }
.greenline { position: absolute; left: 0; right: 0; top: 86px; height: 2px; background: linear-gradient(90deg, #c4d72a, #3c8e12); }
.holder { position: absolute; left: 74px; top: 11px; font: 300 23.500px/32px "Noto Sans CJK SC"; color: #04080a; }
.holder::before { content: ""; position: absolute; left: -12px; top: 15px; width: 7px; height: 7px; border-radius: 50%; background: #000; }
.logo { position: absolute; right: 13px; top: 12.500px; }
.outline { position: absolute; left: 41px; top: 11px; width: 720px; height: 404px; border: 1px dotted #a0a4a5; }
.list { position: absolute; left: 80px; top: 41px; width: 320px; height: 353px; background: #fff; list-style: none; margin: 0; padding: 6px 0 0 15px; font: 350 26.900px/28.200px "Noto Sans CJK SC"; color: #1a1a1a; border-radius: 1px; }
.list li { height: 28.200px; display: flex; white-space: nowrap; }
.list b { width: 41px; flex: none; font: 300 24px/29px "Open Sans", "Noto Sans", sans-serif; letter-spacing: .1px; }
.notes { display: flex; justify-content: space-between; height: 29px; background: #fff; border-top: 2px solid #8e9298; border-bottom: 1px solid #8e9298; }
.notes span { font: 300 15.900px/29px "Noto Sans CJK SC"; color: #111; padding-left: 10px; }

.status { display: flex; height: 22px; flex: none; background: linear-gradient(#e3e6e8, #d4d8db 45%, #c0c5c8); line-height: 21px; color: #444; white-space: nowrap; }
.status span { flex: none; }
.s1 { width: 139px; padding-left: 4px; border-right: 1px solid #a9adb1; letter-spacing: .1px; } .s2 { width: 113px; text-align: center; border-right: 1px solid #a9adb1; } .s3 { width: 69px; text-align: center; border-right: 1px solid #a9adb1; letter-spacing: -.1px; }
.status svg:first-of-type { margin-left: auto; }
.pct { width: 31px; padding-left: 2px; }
.taskbar { display: flex; height: 40px; flex: none; background: #2f3036; align-items: center; color: #eee; }
.app { width: 50px; height: 40px; display: flex; align-items: center; justify-content: center; flex: none; }
.app svg { width: 26px; height: 26px; }
.app.n { width: 48px; padding-right: 4px; } .app.w { width: 55px; padding-right: 5px; } .app.ie { padding-right: 6px; }
.run { box-shadow: inset 0 -2px #76b0e2; background: #2f3036; width: 40px; margin: 0 5px; } .run.first { margin-left: 6px; } .current { width: 48px; margin: 0 1px; background: #585a5f; }
.tray { margin-left: 218px; width: 33px; flex: none; }
.clock { width: 74px; margin-left: 6px; flex: none; display: flex; flex-direction: column; align-items: center; line-height: 18px; }
.action { margin-left: 13px; }
.net { position: absolute; left: 1119px; top: 548px; width: 128px; height: 48px; }
.speed { position: absolute; left: 26px; top: 6px; width: 100px; height: 38px; border-radius: 0 19px 19px 0; background: #efedf0; box-shadow: 0 1px 3px #777; display: flex; align-items: center; padding-left: 25px; }
.rates { display: flex; flex-direction: column; width: 38px; align-items: flex-end; font: 10px/15px "Noto Sans"; letter-spacing: -.6px; color: #111; margin-right: 4px; }
.ball { position: absolute; left: 0; top: 0; width: 47px; height: 47px; border-radius: 50%; border: 2px solid #e9eeea; background: linear-gradient(#16754f 48%, #36b653 50%); box-shadow: 0 1px 3px #555, inset 0 0 0 1px #147a48; color: #fff; font: 600 13px/43px "Open Sans", "Noto Sans"; letter-spacing: .3px; text-align: center; }
.ime { position: absolute; left: 1070px; top: 606px; }
```
